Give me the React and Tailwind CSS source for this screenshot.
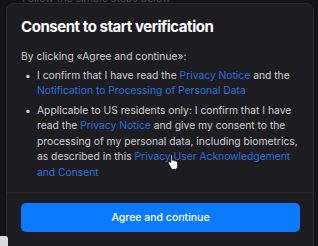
export default function App() {
  const link = "text-[#2f6fdc]";
  return (
    <div className="w-[318px] h-[246px] overflow-hidden bg-[#131317] relative" style={{ fontFamily: "Inter, 'Liberation Sans', sans-serif" }}>
      <div className="h-[2px] overflow-hidden relative">
        <div className="absolute left-[22px] top-[-9px] text-[10.5px] text-[#4a4a52] whitespace-nowrap">Follow the simple steps below</div>
      </div>
      <div className="ml-[6px] mr-[4px] mt-[1px] h-[260px] rounded-[8px] border border-[#2a2a31] bg-[#1c1c21]">
        <div className="pl-[14px] pr-[12px] pt-[13px]">
          <h1 className="text-[15px] leading-[20px] font-bold tracking-[-0.45px] text-white">Consent to start verification</h1>
          <p className="mt-[12px] text-[10.3px] leading-[15.5px] text-[#cfcfd4]">By clicking «Agree and continue»:</p>
          <ul className="mt-[3px] text-[10.3px] leading-[15.5px] text-[#cfcfd4] flex flex-col gap-[4px]">
            <li className="flex">
              <span className="w-[16px] shrink-0 pl-[4px]">•</span>
              <span>I confirm that I have read the <span className={link}>Privacy Notice</span> and the <span className={link}>Notification to Processing of Personal Data</span></span>
            </li>
            <li className="flex">
              <span className="w-[16px] shrink-0 pl-[4px]">•</span>
              <span>Applicable to US residents only: I confirm that I have read the <span className={link}>Privacy Notice</span> and give my consent to the processing of my personal data, including biometrics, as described in this <span className={link}>Privacy User Acknowledgement and Consent</span></span>
            </li>
          </ul>
        </div>
        <div className="mt-[12px] border-t border-[#2a2a31] pl-[14px] pr-[13px] pt-[10px]">
          <button className="w-full h-[29px] rounded-[5px] bg-[#0a7bff] text-white text-[10.5px] font-medium">Agree and continue</button>
        </div>
      </div>
      <svg className="absolute left-[167px] top-[153px]" width="13" height="17" viewBox="0 0 13 17">
        <path d="M4 1.5c.8 0 1.3.5 1.3 1.3v4.5l.3-.1c.7-.2 1.3 0 1.6.5.7-.3 1.4-.1 1.7.5.7-.2 1.4.1 1.6.8l.2 3.5c0 1.6-.7 3-1.8 3.8H4.6L1.4 10.5c-.4-.6-.2-1.3.4-1.6.5-.3 1.1-.2 1.5.2l.4.5V2.8c0-.8.5-1.3 1.3-1.3z" fill="#fff" stroke="#111" strokeWidth="0.9" />
      </svg>
      <div className="absolute left-0 top-[236px] w-[8px] h-[12px] rounded-tr-[3px] bg-[#d9d9de]" />
    </div>
  );
}
